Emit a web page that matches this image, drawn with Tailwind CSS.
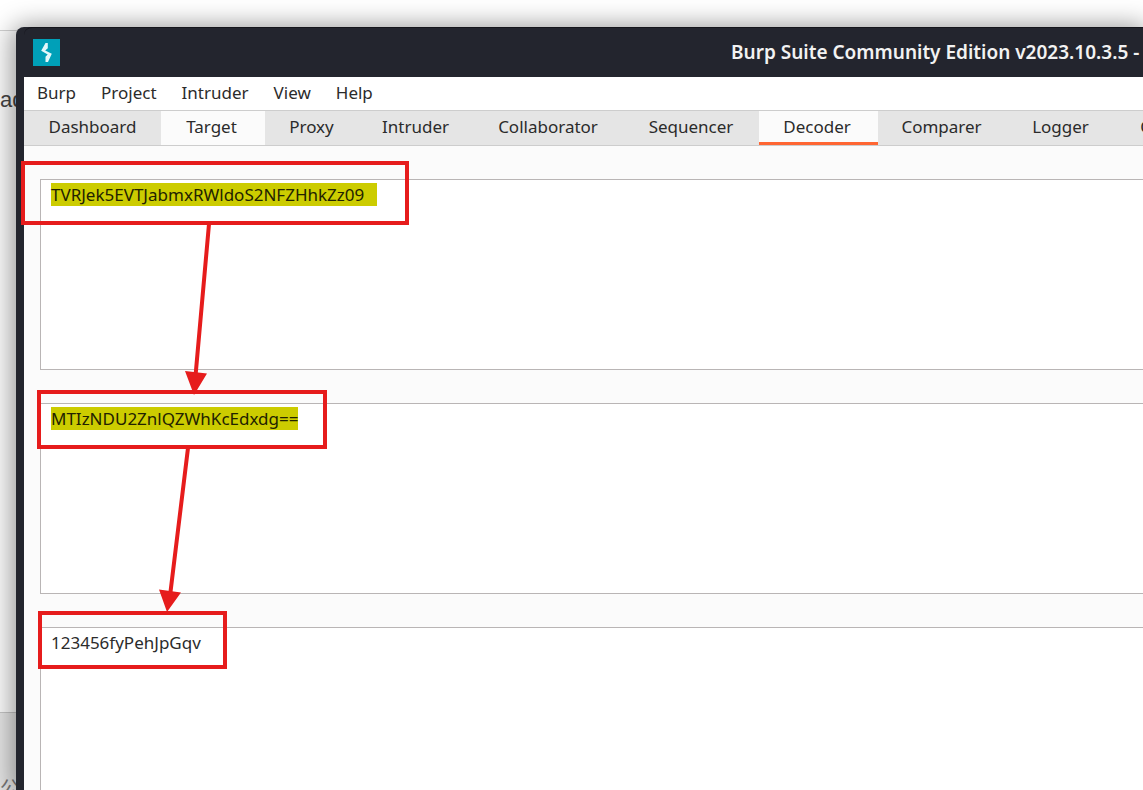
<!DOCTYPE html>
<html lang="en">
<head>
<meta charset="utf-8">
<title>Burp Suite Community Edition</title>
<script src="https://cdn.jsdelivr.net/npm/@tailwindcss/browser@4"></script>
</head>
<body class="relative h-screen overflow-hidden bg-white font-['Noto_Sans','Noto_Sans_CJK_SC',sans-serif] text-[17px] text-[#2b2b2b]">
  <!-- page behind the window -->
  <div class="absolute inset-0 flex flex-col overflow-hidden pt-[30px]" aria-hidden="true">
    <div class="h-[682px] shrink-0 border-t border-[#d0d0d0] bg-[#fafafa] pt-[55px] font-['Liberation_Sans',sans-serif] text-[22px] leading-7 text-[#444]">ad</div>
    <div class="grow border-t border-[#c4c4c4] bg-[#e4e4e4] pt-[64px] text-[20px] leading-6 text-[#777]">公</div>
  </div>

  <!-- application window -->
  <div class="relative flex h-full flex-col pt-[27px] pl-4">
    <div class="relative flex min-h-0 grow flex-col rounded-tl-lg bg-[#23252e] pl-2 shadow-[0_2px_26px_3px_rgba(0,0,0,0.42)]">
      <header class="flex h-[50px] shrink-0 items-center overflow-hidden rounded-tl-lg border-t border-[#15161c] pl-[9px] text-white">
        <svg class="size-[27px] shrink-0" viewBox="0 0 27 27" aria-hidden="true">
          <rect width="27" height="27" fill="#00a0b8"/>
          <path d="M12.500 4h2.300v5.200l-2.600 2.300 6.600 3.300-3.800 8.200h-2.500v-5.200l2.200-2.300-6.500-3.700z" fill="#e2f7fa"/>
        </svg>
        <h1 class="ml-[671px] whitespace-nowrap text-[19px] font-semibold text-[#f2f2f2]">Burp Suite Community Edition v2023.10.3.5 - Temporary Project</h1>
      </header>

      <nav class="flex h-[33px] shrink-0 items-center gap-[25px] bg-white pb-[2px] pl-[13px]" aria-label="Menu">
        <button>Burp</button><button>Project</button><button>Intruder</button><button>View</button><button>Help</button>
      </nav>

      <div class="flex h-9 shrink-0 overflow-hidden border-y border-[#cdcdcd] bg-[#e5e5e5]" role="tablist">
        <button role="tab" class="w-[137px] shrink-0 pb-[2px]">Dashboard</button>
        <button role="tab" class="w-[104px] shrink-0 bg-[#fbfbfb] pr-[3px] pb-[2px]">Target</button>
        <button role="tab" class="w-[93px] shrink-0 pb-[2px]">Proxy</button>
        <button role="tab" class="w-[115px] shrink-0 pb-[2px]">Intruder</button>
        <button role="tab" class="w-[150px] shrink-0 pb-[2px]">Collaborator</button>
        <button role="tab" class="w-[136px] shrink-0 pb-[2px]">Sequencer</button>
        <button role="tab" aria-selected="true" class="relative w-[119px] shrink-0 bg-[#fbfbfb] pr-[3px] pb-[2px]">Decoder<span class="absolute inset-x-0 bottom-0 h-[3px] bg-[#ff6633]"></span></button>
        <button role="tab" class="w-[130px] shrink-0 pr-[3px] pb-[2px]">Comparer</button>
        <button role="tab" class="w-[105px] shrink-0 pb-[2px]">Logger</button>
        <button role="tab" class="w-[134px] shrink-0 pb-[2px]">Organizer</button>
      </div>

      <main class="relative flex min-h-0 grow flex-col gap-[33px] overflow-hidden bg-[#fbfbfb] pt-[33px] pl-4">
        <div role="textbox" aria-label="Input" contenteditable="true" class="h-[191px] shrink-0 border border-r-0 border-[#b9b5b5] bg-white px-[10px] py-[3px] leading-[23px]"><mark class="inline-block min-w-[326px] bg-[#cccc00] text-[#222200]">TVRJek5EVTJabmxRWldoS2NFZHhkZz09</mark></div>
        <div role="textbox" aria-label="First decode" contenteditable="true" class="h-[191px] shrink-0 border border-r-0 border-[#b9b5b5] bg-white px-[10px] py-[3px] leading-[23px]"><mark class="inline-block bg-[#cccc00] text-[#222200]">MTIzNDU2ZnlQZWhKcEdxdg==</mark></div>
        <textarea aria-label="Second decode" class="h-[191px] shrink-0 resize-none border border-r-0 border-[#b9b5b5] bg-white px-[10px] py-[3px] leading-[23px]">123456fyPehJpGqv</textarea>
      </main>
    </div>
  </div>

  <!-- annotations -->
  <svg class="pointer-events-none absolute top-0 left-0" width="420" height="700" viewBox="0 0 420 700" fill="none" stroke="#e61c1c" stroke-width="4" aria-hidden="true">
    <rect x="23" y="163" width="384" height="60"/>
    <rect x="39" y="392" width="286" height="55"/>
    <rect x="40" y="613" width="185" height="54"/>
    <path d="M209 224L195.500 376M188 448L170 596"/>
    <path d="M185 371L207 373.500L194 395ZM159 589.500L181 592.500L167 612Z" fill="#e61c1c" stroke="none"/>
  </svg>
</body>
</html>
